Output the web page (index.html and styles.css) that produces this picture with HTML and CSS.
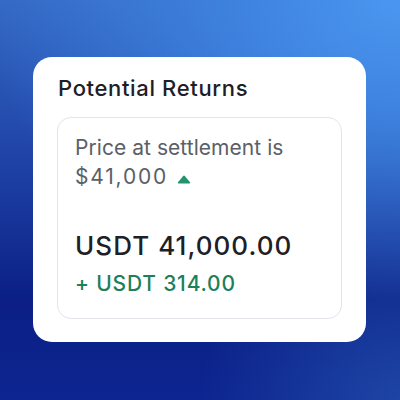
FILE: index.html
```html
<!DOCTYPE html>
<html>
<head>
<meta charset="utf-8">
<link rel="stylesheet" href="styles.css">
</head>
<body>
<div class="stage">
  <div class="card">
    <h2 class="title">Potential Returns</h2>
    <div class="panel">
      <div class="price-label">Price at settlement is</div>
      <div class="price-row">
        <span class="price">$41,000</span>
        <svg class="tri" width="14" height="9" viewBox="0 0 14 9"><path d="M6 1.2 Q7 0 8 1.2 L13.2 7.6 Q13.6 8.6 12.4 8.6 L1.6 8.6 Q0.4 8.6 0.8 7.6 Z" fill="#22936a"/></svg>
      </div>
      <div class="amount">USDT 41,000.00</div>
      <div class="gain">+ USDT 314.00</div>
    </div>
  </div>
</div>
</body>
</html>
```

FILE: styles.css
```css
html, body {
  margin: 0;
  padding: 0;
}
.stage {
  width: 400px;
  height: 400px;
  box-sizing: border-box;
  padding: 57px 34px 58px 33px;
  background:
    radial-gradient(ellipse 420px 300px at 100% 0%, #4b97f0 0%, #3f84e0 35%, rgba(40,90,190,0) 100%),
    radial-gradient(ellipse 200px 200px at 100% 100%, rgba(40,90,180,0.6) 0%, rgba(20,50,160,0) 100%),
    linear-gradient(180deg, #3468c4 0%, #1c3ea2 45%, #0b1f86 75%, #0d2590 100%);
  font-family: Inter, "Noto Sans", sans-serif;
}
.card {
  background: #ffffff;
  border-radius: 19px;
  height: 100%;
  box-sizing: border-box;
  padding: 17px 24px 23px 24px;
  display: flex;
  flex-direction: column;
}
.title {
  margin: 0 0 0 1px;
  font-size: 22px;
  line-height: 28px;
  font-weight: 500;
  color: #1d2026;
  letter-spacing: 0.65px;
}
.panel {
  margin-top: 15px;
  flex: 1;
  border: 1px solid #e1e4e9;
  border-radius: 14px;
  padding: 17px 17px 0 17px;
}
.price-label {
  font-size: 21px;
  line-height: 26px;
  color: #5b6068;
  letter-spacing: 0.05px;
}
.price-row {
  margin-top: 2px;
  display: flex;
  align-items: center;
  gap: 9px;
}
.price {
  font-size: 21px;
  line-height: 27px;
  color: #5b6068;
  letter-spacing: 1.8px;
}
.tri {
  margin-top: 6px;
}
.amount {
  margin-top: 40px;
  font-size: 26px;
  line-height: 32px;
  font-weight: 500;
  color: #1d2026;
  letter-spacing: 1.05px;
}
.gain {
  margin-top: 8px;
  font-size: 21px;
  line-height: 28px;
  font-weight: 500;
  color: #1e7f5a;
  letter-spacing: 0.8px;
}
```
